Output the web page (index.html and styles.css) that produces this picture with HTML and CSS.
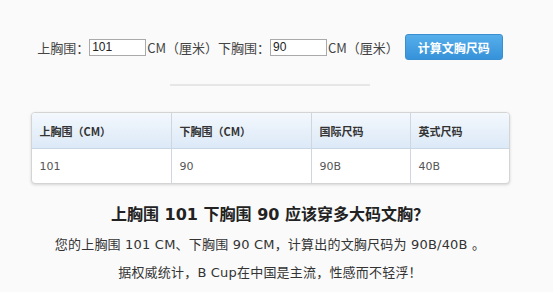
FILE: index.html
```html
<!DOCTYPE html>
<html lang="zh-CN">

<head>
    <meta charset="UTF-8">
    <title>文胸尺码计算</title>
    <link rel="stylesheet" href="styles.css">
</head>

<body>
    <div class="container">
        <form class="calc-form">
            <label>上胸围：</label>
            <input type="text" class="size-input" value="101">
            <span class="unit">CM（厘米）</span>
            <label>下胸围：</label>
            <input type="text" class="size-input" value="90">
            <span class="unit">CM（厘米）</span>
            <button type="button" class="calc-btn">计算文胸尺码</button>
        </form>

        <div class="divider"></div>

        <table class="result-table">
            <thead>
                <tr>
                    <th class="col-a">上胸围（CM）</th>
                    <th class="col-a">下胸围（CM）</th>
                    <th class="col-b">国际尺码</th>
                    <th>英式尺码</th>
                </tr>
            </thead>
            <tbody>
                <tr>
                    <td>101</td>
                    <td>90</td>
                    <td>90B</td>
                    <td>40B</td>
                </tr>
            </tbody>
        </table>

        <h2 class="answer-title">上胸围 101 下胸围 90 应该穿多大码文胸？</h2>
        <p class="answer-text">您的上胸围 101 CM、下胸围 90 CM，计算出的文胸尺码为 90B/40B 。</p>
        <p class="answer-text">据权威统计，B Cup在中国是主流，性感而不轻浮！</p>
    </div>
</body>

</html>
```

FILE: styles.css
```css
body {
    margin: 0;
    background-color: #fafafa;
    font-family: "DejaVu Sans", "Noto Sans CJK SC", sans-serif;
    color: #333;
}

.container {
    width: 540px;
    display: flex;
    flex-direction: column;
    align-items: center;
}

.calc-form {
    display: flex;
    align-items: center;
    margin-top: 34px;
    font-family: "Noto Sans CJK JP", sans-serif;
    font-feature-settings: "halt" 0, "chws" 0, "palt" 0;
    font-size: 13px;
    color: #444;
}

.size-input {
    width: 51px;
    height: 13px;
    padding: 1px 2px;
    border: 1px solid #aaa;
    font-family: "Liberation Sans", sans-serif;
    font-size: 12px;
    color: #222;
    background: #fff;
    margin: 0;
}

.unit {
    margin-left: 1px;
}

.calc-btn {
    margin-left: 6px;
    width: 98px;
    height: 26px;
    border: 1px solid #3a8fd0;
    border-radius: 3px;
    background: linear-gradient(#56aeea, #3692da);
    color: #fff;
    font-family: "Noto Sans CJK SC", sans-serif;
    font-weight: bold;
    font-size: 12px;
    cursor: pointer;
}

.divider {
    width: 200px;
    height: 2px;
    background-color: #e6e6e6;
    margin-top: 24px;
}

.result-table {
    width: 479px;
    margin-top: 26px;
    border-collapse: separate;
    border-spacing: 0;
    border: 1px solid #d4d4d4;
    border-radius: 4px;
    box-shadow: 0 1px 3px rgba(0, 0, 0, 0.15);
    background: #fff;
    font-size: 11px;
    overflow: hidden;
}

.result-table th,
.result-table td {
    text-align: left;
    padding: 0 8px;
    border-left: 1px solid #cfd6de;
}

.result-table th:first-child,
.result-table td:first-child {
    border-left: none;
}

.result-table th {
    height: 35px;
    background: linear-gradient(#f3f8fd, #dce9f7);
    border-bottom: 1px solid #c9d6e4;
    color: #333;
    font-weight: bold;
    font-family: "Noto Sans CJK SC", sans-serif;
}

.result-table td {
    height: 34px;
    color: #555;
}

.col-a {
    width: 123px;
}

.col-b {
    width: 82px;
}

.answer-title {
    font-size: 16px;
    font-weight: bold;
    color: #222;
    margin: 17px 0 0;
    font-family: "DejaVu Sans", "Noto Sans CJK JP", sans-serif;
}

.answer-text {
    font-size: 13px;
    color: #333;
    margin: 9px 0 0;
    letter-spacing: 0.2px;
}
```
